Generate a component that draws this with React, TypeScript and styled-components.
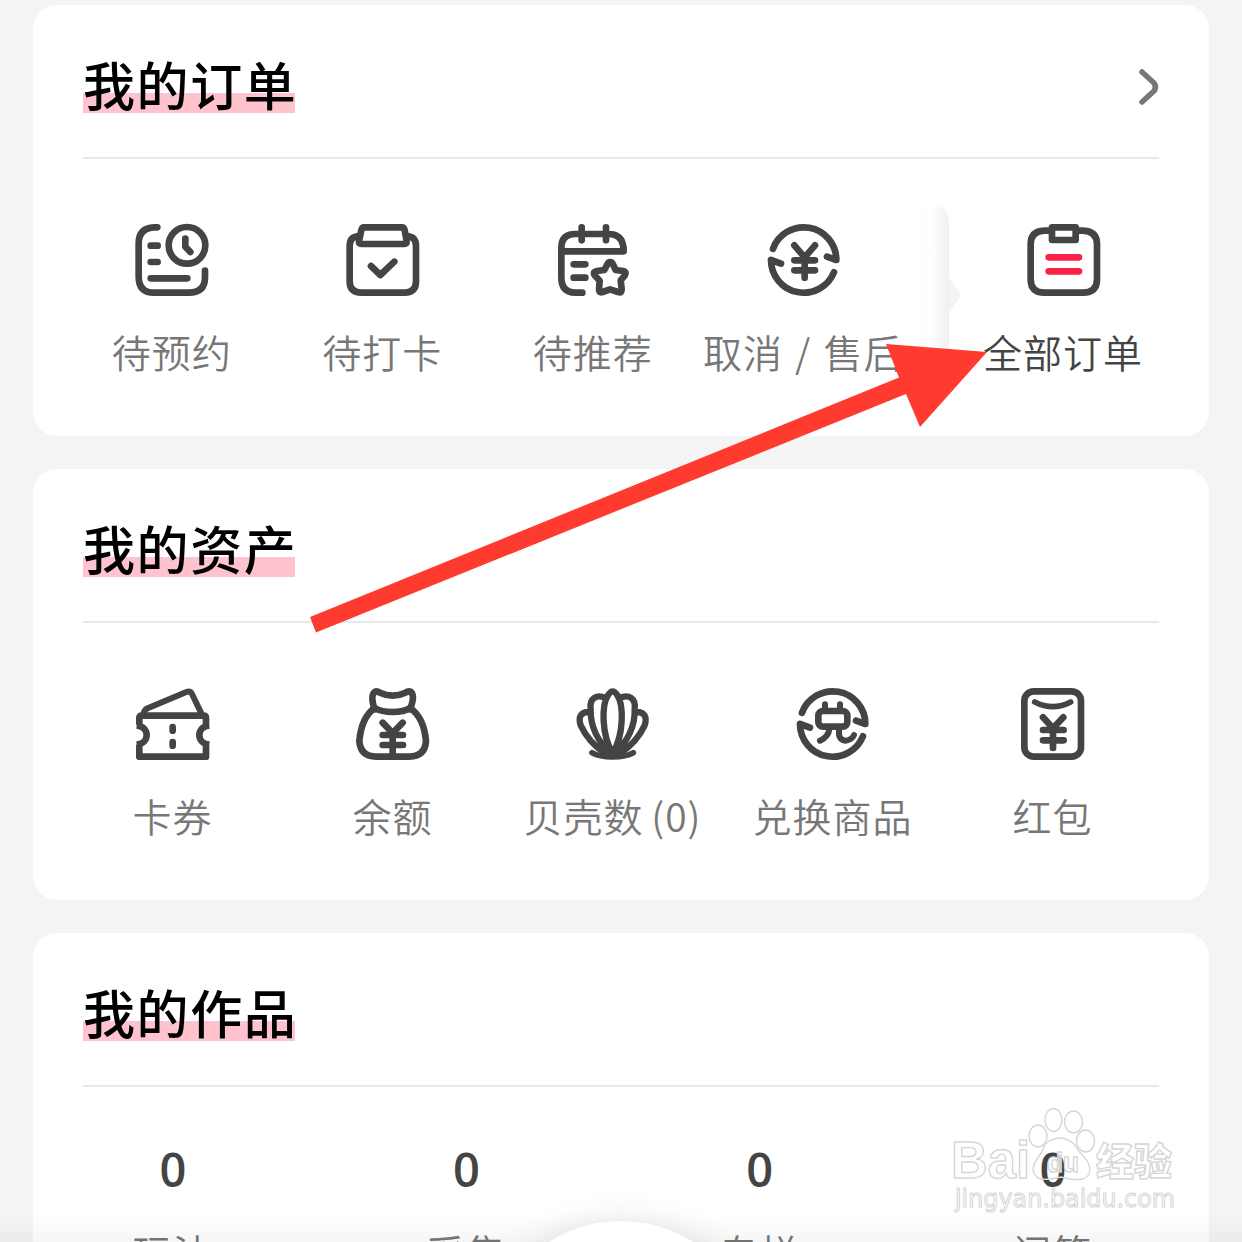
import React from 'react';
import styled, { createGlobalStyle } from 'styled-components';

const Global = createGlobalStyle`
  html, body { margin: 0; background: #f4f4f4; overflow: hidden; }
  * { box-sizing: border-box; }
`;

const Page = styled.main`
  position: relative;
  width: 1242px;
  height: 1242px;
  overflow: hidden;
  padding: 5px 33px 0;
  display: flex;
  flex-direction: column;
  gap: 33px;
  background: #f4f4f4;
  font-family: 'Noto Sans CJK SC', sans-serif;
`;

const Card = styled.section`
  flex: none;
  height: 431px;
  padding: 0 50px;
  border-radius: 24px;
  background: #fff;
`;

const Header = styled.header`
  height: 154px;
  display: flex;
  align-items: center;
  justify-content: space-between;
  border-bottom: 2px solid #e8e8e8;
`;

const Title = styled.h2`
  margin: 8px 0 0;
  width: 212px;
  height: 62px;
  line-height: 59px;
  font-size: 52px;
  letter-spacing: 1.6px;
  font-weight: 500;
  color: #000;
  white-space: nowrap;
  background: linear-gradient(#ffc3ce, #ffc3ce) 0 39px / 212px 20px no-repeat;
`;

const Row = styled.div<{ $top: number }>`
  display: flex;
  justify-content: space-between;
  padding: ${(p) => p.$top}px 16px 0 0;
`;

const OrderRow = styled.div`
  display: grid;
  grid-template-columns: repeat(4, 210.5px) 59px 191px;
  margin-left: -16px;
  padding-top: 65px;
`;

const Item = styled.div<{ $wide?: boolean }>`
  width: ${(p) => (p.$wide ? 'auto' : '180px')};
  display: flex;
  flex-direction: column;
  align-items: center;
`;

const Label = styled.span<{ $dark?: boolean; $spacing?: number }>`
  margin-top: 29px;
  padding-right: 1px;
  line-height: 50px;
  font-size: 39px;
  letter-spacing: 1px;
  font-weight: 350;
  color: ${(p) => (p.$dark ? '#444' : '#777')};
  white-space: nowrap;
  word-spacing: ${(p) => p.$spacing ?? 0}px;
`;

const Count = styled.span`
  font-family: 'Open Sans', sans-serif;
  line-height: 60px;
  font-size: 47px;
  font-weight: 600;
  color: #444;
`;

const CountLabel = styled(Label)`
  margin-top: 27px;
`;

const Divider = styled.svg`
  display: block;
  width: 59px;
  height: 180px;
  margin-top: -18px;
`;

const Glyph = styled.svg`
  display: block;
  width: 74px;
  height: 73px;
  overflow: visible;
  fill: none;
  stroke: #444;
  stroke-width: 20px;
  stroke-linecap: round;
  stroke-linejoin: round;
`;

const Overlay = styled.svg`
  position: absolute;
  left: 0;
  top: 0;
  width: 1242px;
  height: 1242px;
  pointer-events: none;
`;

const BarShadow = styled.div`
  position: absolute;
  left: 0;
  right: 0;
  bottom: 0;
  height: 30px;
  background: linear-gradient(rgba(0, 0, 0, 0), rgba(0, 0, 0, 0.035));
`;

const BarBump = styled.div`
  position: absolute;
  left: 486px;
  top: 1221px;
  width: 270px;
  height: 270px;
  border-radius: 50%;
  background: #fff;
  box-shadow: 0 0 34px rgba(0, 0, 0, 0.1);
`;

const Icon = ({ children }: { children: React.ReactNode }) => (
  <Glyph viewBox="0 0 222 219">{children}</Glyph>
);

const ReserveIcon = () => (
  <Icon>
    <path d="M67 10H58Q11 12 11 58V158Q11 206 58 206H162Q210 206 210 160V140M47 65H68M47 114H68M47 163H157" />
    <circle cx="156" cy="64" r="55" />
    <path d="M151 44V68L166 84" />
  </Icon>
);

const CheckIcon = () => (
  <Icon>
    <path d="M38 36Q11 38 11 66V172Q11 206 46 206H176Q210 206 210 172V66Q210 38 184 36" />
    <path d="M54 10H168Q174 10 176 18L182 52Q183 60 175 60H46Q38 60 39 52L46 18Q48 10 54 10Z" />
    <path d="M75 126L103 153L145 113" />
  </Icon>
);

const RecommendIcon = () => (
  <Icon>
    <path d="M79 206H58Q16 206 16 160V72Q16 30 58 30H158Q203 30 203 82H17M77 10V49M150 10V49M53 121H88M53 161H88" />
    <path d="M162 114Q168 114 171 121L179 138L201 141Q214 144 206 155L194 169L197 195Q198 209 186 204L162 196L140 204Q128 208 129 195L131 170L116 154Q109 143 122 141L145 138L154 121Q157 114 162 114Z" />
  </Icon>
);

const CycleArrows = () => (
  <path d="M17.900 74.500A98 98 0 0 1 208 108L180 98M12 108L42 119M12 108A98 98 0 0 0 200.900 144.700" />
);

const RefundIcon = () => (
  <Icon>
    <CycleArrows />
    <path d="M82 64L113 100L144 64M82 109H144M82 139H144M113 104V161" />
  </Icon>
);

const AllOrdersIcon = () => (
  <Icon>
    <path d="M65 20H52Q11 22 11 60V166Q11 206 52 206H168Q210 206 210 166V60Q210 22 168 20H156" />
    <path d="M75 10H146V48H75Z" />
    <path stroke="#fa2148" d="M65 100H156M65 142H156" />
  </Icon>
);

const CouponIcon = () => (
  <Icon>
    <path strokeWidth="18" d="M23 75Q26 65 35 61L151 12Q163 8 168 18L195 74" />
    <path strokeLinecap="butt" d="M2 110H10V90Q10 83 18 83H202Q210 83 210 90V110H220M2 170H10V206H210V170H220M2 112C42 116 42 166 2 170M220 112C180 116 180 166 220 170" />
    <path d="M110 117V128M110 162V173" />
  </Icon>
);

const BagIcon = () => (
  <Icon>
    <path d="M56 64Q42 24 56 12Q62 8 72 14Q110 32 148 14Q158 8 165 12Q178 24 162 64" />
    <path d="M56 60Q76 72 110 72Q144 72 162 60Q204 88 210 160Q206 206 160 206H60Q14 206 10 160Q16 88 56 60Z" />
    <path d="M80 104L110 135L140 104M80 141H141M80 171H141M110 138V204" />
  </Icon>
);

const ShellIcon = () => (
  <Icon>
    <path strokeWidth="17" d="M48 194Q70 206 110 207Q150 206 172 194" />
    <path strokeWidth="19" d="M110 196C76 140 76 50 97 20Q110 0 123 20C144 50 144 140 110 196ZM90 31C62 16 40 32 44 62C42 118 66 158 102 196M130 31C158 16 180 32 176 62C178 118 154 158 118 196M38 72C14 72 6 88 14 112C30 146 54 174 88 196M182 72C206 72 214 88 206 112C190 146 166 174 132 196" />
  </Icon>
);

const ExchangeIcon = () => (
  <Icon>
    <CycleArrows />
    <rect x="67" y="69" width="87" height="47" rx="14" />
    <path strokeWidth="18" d="M87 49V64M132 49V64M100 122Q98 146 72 158M129 122V140Q131 156 148 158Q168 156 174 141" />
  </Icon>
);

const EnvelopeIcon = () => (
  <Icon>
    <rect x="25" y="10" width="170" height="196" rx="28" />
    <path strokeWidth="17" d="M56 42Q111 70 164 42" />
    <path d="M81 88L111 121L142 88M81 126H143M81 157H143M111 122V180" />
  </Icon>
);

const Chevron = styled.svg`
  flex: none;
  width: 22px;
  height: 38px;
  margin-top: 12px;
  overflow: visible;
`;

const orders = [
  { label: '待预约', icon: <ReserveIcon /> },
  { label: '待打卡', icon: <CheckIcon /> },
  { label: '待推荐', icon: <RecommendIcon /> },
  { label: '取消 / 售后', icon: <RefundIcon />, spacing: 2.5 },
];

const assets = [
  { label: '卡券', icon: <CouponIcon /> },
  { label: '余额', icon: <BagIcon /> },
  { label: '贝壳数 (0)', icon: <ShellIcon />, spacing: -2 },
  { label: '兑换商品', icon: <ExchangeIcon /> },
  { label: '红包', icon: <EnvelopeIcon /> },
];

const works = ['玩法', '采集', '专栏', '问答'];

const Watermark = () => (
  <g fill="#fff" fillOpacity="0.75" stroke="#d6d6d6" strokeWidth="1.4" strokeLinejoin="round">
    <text x="951" y="1178" fontSize="51" fontWeight="700" fontFamily="'Liberation Sans', sans-serif" textLength="79" lengthAdjust="spacingAndGlyphs">Bai</text>
    <ellipse cx="1038" cy="1136" rx="9" ry="11" />
    <ellipse cx="1053.500" cy="1120" rx="8.500" ry="11.500" />
    <ellipse cx="1073.500" cy="1122" rx="9" ry="11" />
    <ellipse cx="1085.500" cy="1141" rx="9" ry="11" />
    <path fill="none" d="M1045 1144Q1060 1132 1074 1144Q1078 1151 1086 1159Q1095 1174 1083 1179Q1076 1181 1061 1177Q1044 1181 1038 1178Q1029 1171 1037 1159Q1042 1153 1045 1144Z" />
    <text x="1047" y="1172" fontSize="28" fontWeight="700" fontFamily="'Liberation Sans', sans-serif" textLength="32" lengthAdjust="spacingAndGlyphs">du</text>
    <text x="1096" y="1175" fontSize="38" fontWeight="900" fontFamily="'Noto Sans CJK SC', sans-serif">经验</text>
    <text x="955" y="1207" fontSize="25" strokeWidth="1.1" fontFamily="'DejaVu Sans', sans-serif" textLength="220" lengthAdjust="spacingAndGlyphs">jingyan.baidu.com</text>
  </g>
);

export default function App() {
  return (
    <>
      <Global />
      <Page>
        <Card>
          <Header>
            <Title>我的订单</Title>
            <Chevron viewBox="0 0 22 38" fill="none" stroke="#777" strokeWidth="5.5" strokeLinecap="round" strokeLinejoin="round">
              <path d="M5 4L17 15Q20 19 17 23L5 34" />
            </Chevron>
          </Header>
          <OrderRow>
            {orders.map((o) => (
              <Item key={o.label} $wide>
                {o.icon}
                <Label $spacing={o.spacing}>{o.label}</Label>
              </Item>
            ))}
            <Divider viewBox="0 0 59 180">
              <defs>
                <linearGradient id="fold">
                  <stop offset="0" stopColor="#fff" />
                  <stop offset="0.5" stopColor="#fdfdfd" />
                  <stop offset="1" stopColor="#f0f0f0" />
                </linearGradient>
              </defs>
              <path fill="url(#fold)" d="M8 0H26Q40 0 40 18V162Q40 180 26 180H8Z" />
              <path fill="#f4f4f4" d="M40 71L52 89L40 107Z" />
            </Divider>
            <Item $wide>
              <AllOrdersIcon />
              <Label $dark>全部订单</Label>
            </Item>
          </OrderRow>
        </Card>
        <Card>
          <Header>
            <Title>我的资产</Title>
          </Header>
          <Row $top={65}>
            {assets.map((a) => (
              <Item key={a.label}>
                {a.icon}
                <Label $spacing={a.spacing}>{a.label}</Label>
              </Item>
            ))}
          </Row>
        </Card>
        <Card>
          <Header>
            <Title>我的作品</Title>
          </Header>
          <Row $top={52}>
            {works.map((w) => (
              <Item key={w}>
                <Count>0</Count>
                <CountLabel>{w}</CountLabel>
              </Item>
            ))}
          </Row>
        </Card>
        <BarShadow />
        <BarBump />
        <Overlay viewBox="0 0 1242 1242">
          <polygon fill="#ff3b30" points="310,617 899,377.500 886,344 987,352 920,427 906,394 316,632.500" />
          <Watermark />
        </Overlay>
      </Page>
    </>
  );
}
